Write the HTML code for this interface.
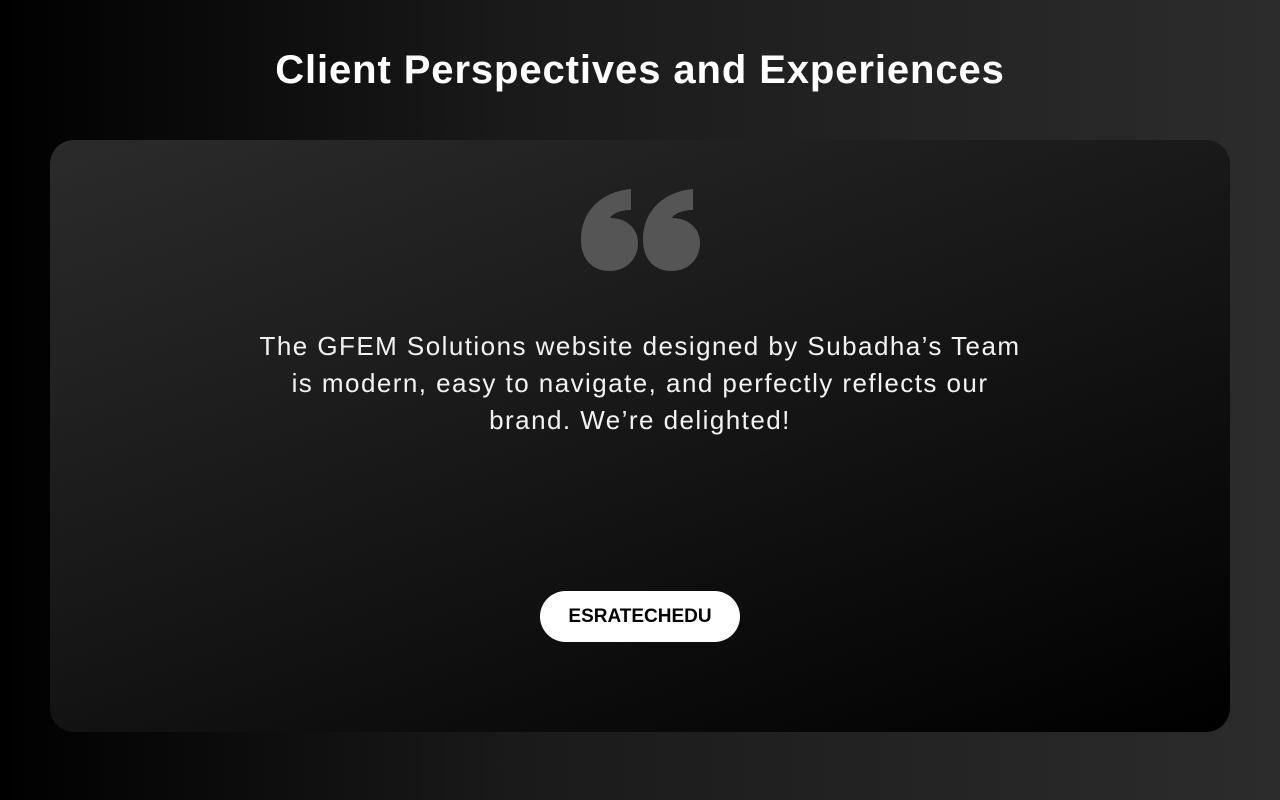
<!DOCTYPE html>
<html><head><meta charset="utf-8"><style>
html,body{margin:0;width:1280px;height:800px;overflow:hidden}
body{background:linear-gradient(90deg,#000 0%,#1a1a1a 40%,#2c2c2c 100%);font-family:"Liberation Sans",sans-serif;position:relative}
h1{position:absolute;top:48px;left:0;width:1280px;text-align:center;margin:0;color:#fff;font-size:40px;font-weight:bold;letter-spacing:0.9px}
.card{position:absolute;left:50px;top:140px;width:1180px;height:592px;border-radius:24px;background:linear-gradient(160deg,#2b2b2b 0%,#161616 50%,#000 100%)}
svg{position:absolute;left:530px;top:48px}
p{position:absolute;left:100px;top:188px;width:980px;margin:0;text-align:center;color:#f2f2f2;font-size:26px;line-height:37px;font-weight:300;letter-spacing:1.45px;white-space:nowrap}
.btn{position:absolute;left:490px;top:451px;width:200px;height:51px;border-radius:26px;background:#fff;color:#000;font-weight:bold;font-size:19px;line-height:51px;text-align:center}
</style></head><body>
<h1>Client Perspectives and Experiences</h1>
<div class="card">
<svg width="130" height="90" viewBox="0 0 130 90"><g fill="#555">
<path d="M51,1 L51,22 C40,22 32,26 30,30 C46,30 58,40 58,55 C58,71 46,83 30,83 C12,83 1,71 1,52 C1,24 20,4 51,1 Z"/>
<path transform="translate(62,0)" d="M51,1 L51,22 C40,22 32,26 30,30 C46,30 58,40 58,55 C58,71 46,83 30,83 C12,83 1,71 1,52 C1,24 20,4 51,1 Z"/>
</g></svg>
<p>The GFEM Solutions website designed by Subadha’s Team<br>is modern, easy to navigate, and perfectly reflects our<br>brand. We’re delighted!</p>
<div class="btn">ESRATECHEDU</div>
</div>
</body></html>
